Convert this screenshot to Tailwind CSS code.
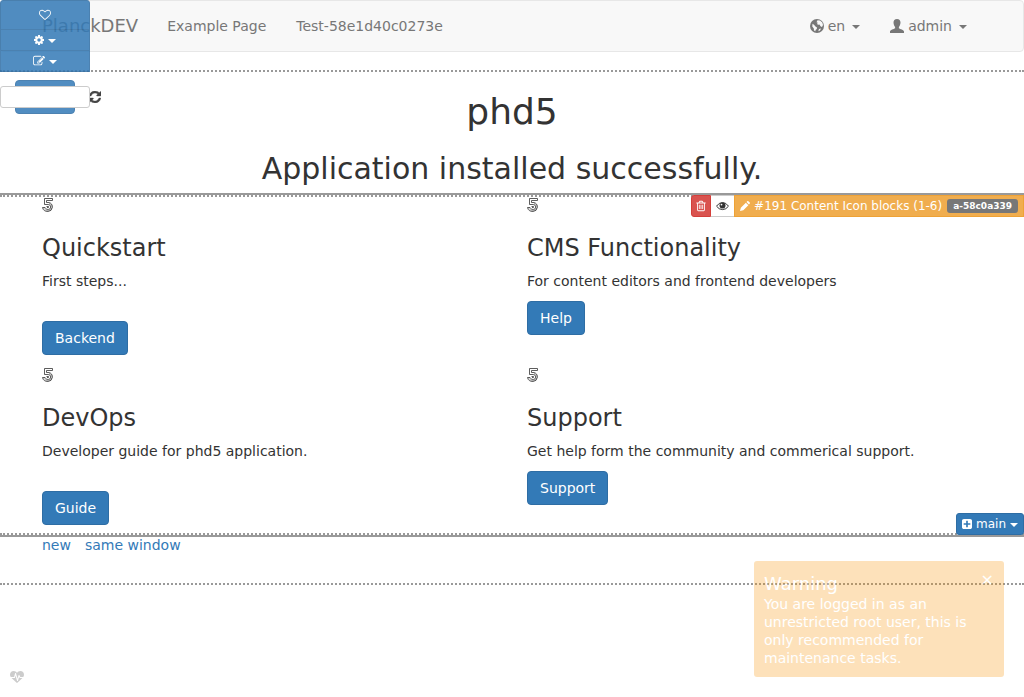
<!DOCTYPE html>
<html lang="en">
<head>
<meta charset="utf-8">
<title>phd5</title>
<script src="https://cdn.jsdelivr.net/npm/@tailwindcss/browser@4"></script>
</head>
<body class="relative min-h-screen bg-white font-['DejaVu_Sans',sans-serif] text-sm leading-5 text-[#333]">

<svg class="hidden" aria-hidden="true">
  <symbol id="five" viewBox="0 0 12 14">
    <g fill="none" stroke="#333" stroke-width="0.8">
      <path d="M10.500 .5H2.500V6.500H6.200A2.300 2.300 0 0 1 6.200 11.500C4.500 11.500 3.400 10.500 3 9.500H.5C1 12.300 3.200 13.500 6 13.500A4.600 4.600 0 0 0 7 4.500H4.500V2.500H10.500Z"/>
      <path d="M4.500 8.500H6.500V9.500H5"/>
    </g>
    <path fill="none" stroke="#333" stroke-width="0.4" d="M7 5.500A3.400 3.400 0 0 1 6.300 12.500C4 12.500 2.500 11.500 1.700 10.300"/>
  </symbol>
</svg>

<nav class="flex h-[52px] items-center justify-between rounded border border-[#e7e7e7] bg-[#f8f8f8] px-[41px] text-[#777]">
  <div class="flex items-center gap-[29px]">
    <a href="#" class="text-lg leading-5">PlanckDEV</a>
    <div class="flex gap-[30px]">
      <a href="#">Example Page</a>
      <a href="#">Test-58e1d40c0273e</a>
    </div>
  </div>
  <div class="flex items-center gap-[30px] pr-[15px]">
    <button class="flex items-center gap-1">
      <svg class="size-3.5" viewBox="0 0 14 14"><circle cx="7" cy="7" r="7" fill="#777"/><path fill="#f8f8f8" d="M7.500 1.200L10 1.600 12.300 3.500 13 6 12 8 10.500 7.200 9.500 5.500 8.200 5.800 7 5 7.800 3.800 6.500 3.200ZM2.500 4.800L4 5.800 5.500 7.500 7 8.500 6.800 10 5.500 11 5.500 12.300 4 11.500 3.800 9.500 2.300 7.500ZM9 10L11 9.500 10 11.500 8.300 12.300Z"/></svg>
      <span>en</span>
      <span class="mt-0.5 ml-[3px] border-x-4 border-t-4 border-x-transparent border-t-[#777]"></span>
    </button>
    <button class="flex items-center gap-1">
      <svg class="size-3.5" viewBox="0 0 14 14" fill="#777"><path d="M7 0C9.300 0 10.600 1.500 10.500 3.800C10.400 5.700 9.600 7.200 8.900 8V9.300C10 10.300 14 10.800 14 12.600V14H0V12.600C0 10.800 4 10.300 5.100 9.300V8C4.400 7.200 3.600 5.700 3.500 3.800C3.400 1.500 4.700 0 7 0Z"/></svg>
      <span>admin</span>
      <span class="mt-0.5 ml-[3px] border-x-4 border-t-4 border-x-transparent border-t-[#777]"></span>
    </button>
  </div>
</nav>

<main class="mt-[18px]">
  <header class="border-t-2 border-b-2 border-t-[#999] border-b-[#999] pt-5 pb-2 text-center [border-top-style:dotted]">
    <h1 class="text-4xl leading-10">phd5</h1>
    <h2 class="mt-5 text-3xl leading-[33px]">Application installed successfully.</h2>
  </header>

  <div class="relative border-b-2 border-[#999]">
    <section class="border-y-2 border-dotted border-[#999]">
      <div class="mx-auto grid max-w-[970px] grid-cols-2 gap-y-3 px-[15px] pb-2">
        <article class="pr-[15px]">
          <svg class="mt-px h-3.5 w-3"><use href="#five"/></svg>
          <h3 class="mt-[23px] text-2xl leading-[26px]">Quickstart</h3>
          <p class="mt-2.5">First steps...</p>
          <a href="#" class="mt-[30px] inline-block rounded border border-[#2e6da4] bg-[#337ab7] px-3 py-1.5 text-white">Backend</a>
        </article>
        <article class="pl-[15px]">
          <svg class="mt-px h-3.5 w-3"><use href="#five"/></svg>
          <h3 class="mt-[23px] text-2xl leading-[26px]">CMS Functionality</h3>
          <p class="mt-2.5">For content editors and frontend developers</p>
          <a href="#" class="mt-2.5 inline-block rounded border border-[#2e6da4] bg-[#337ab7] px-3 py-1.5 text-white">Help</a>
        </article>
        <article class="pr-[15px]">
          <svg class="mt-px h-3.5 w-3"><use href="#five"/></svg>
          <h3 class="mt-[23px] text-2xl leading-[26px]">DevOps</h3>
          <p class="mt-2.5">Developer guide for phd5 application.</p>
          <a href="#" class="mt-[30px] inline-block rounded border border-[#2e6da4] bg-[#337ab7] px-3 py-1.5 text-white">Guide</a>
        </article>
        <article class="pl-[15px]">
          <svg class="mt-px h-3.5 w-3"><use href="#five"/></svg>
          <h3 class="mt-[23px] text-2xl leading-[26px]">Support</h3>
          <p class="mt-2.5">Get help form the community and commerical support.</p>
          <a href="#" class="mt-2.5 inline-block rounded border border-[#2e6da4] bg-[#337ab7] px-3 py-1.5 text-white">Support</a>
        </article>
      </div>
    </section>

    <div class="absolute top-0 right-0 flex h-[22px] text-xs leading-[18px]">
      <button aria-label="Delete" class="flex items-center rounded-l-[3px] border border-[#d43f3a] bg-[#d9534f] px-[3px]">
        <svg class="size-3" viewBox="0 0 1792 1792" fill="#fff"><path d="M704 736v576q0 14-9 23t-23 9h-64q-14 0-23-9t-9-23v-576q0-14 9-23t23-9h64q14 0 23 9t9 23zm256 0v576q0 14-9 23t-23 9h-64q-14 0-23-9t-9-23v-576q0-14 9-23t23-9h64q14 0 23 9t9 23zm256 0v576q0 14-9 23t-23 9h-64q-14 0-23-9t-9-23v-576q0-14 9-23t23-9h64q14 0 23 9t9 23zm128 724v-948h-896v948q0 22 7 40.500t14.500 27 10.500 8.500h832q3 0 10.500-8.500t14.500-27 7-40.500zm-672-1076h448l-48-117q-7-9-17-11h-317q-10 2-17 11zm928 32v64q0 14-9 23t-23 9h-96v948q0 83-47 143.500t-113 60.500h-832q-66 0-113-58.500t-47-141.500v-952h-96q-14 0-23-9t-9-23v-64q0-14 9-23t23-9h309l70-167q15-37 54-63t79-26h320q40 0 79 26t54 63l70 167h309q14 0 23 9t9 23z"/></svg>
      </button>
      <button aria-label="Toggle visibility" class="flex items-center border-y border-[#ccc] bg-white px-[5px]">
        <svg class="h-3 w-[13px]" viewBox="0 0 13 12"><path d="M.5 6.200Q3 2.500 6.500 2.500T12.500 6.200Q10 9.600 6.500 9.600T.5 6.200Z" fill="#fff" stroke="#333"/><circle cx="6.500" cy="5.600" r="3" fill="#333"/><circle cx="5.500" cy="4.600" r=".9" fill="#fff"/></svg>
      </button>
      <button class="flex items-center border border-[#eea236] bg-[#f0ad4e] px-[5px] text-white">
        <svg class="size-2.5" viewBox="0 0 12 12" fill="#fff"><path d="M0 12L1 8 7 2 10 5 4 11ZM7.800 1.200L9 0Q9.500-.3 10 .2L11.700 1.900Q12.200 2.400 11.800 3L10.700 4.100Z"/></svg>
        <span class="ml-1">#191 Content Icon blocks (1-6)</span>
        <span class="ml-[5px] rounded-[3px] bg-[#777] px-1.5 text-[9px] leading-[14px] font-bold">a-58c0a339</span>
      </button>
    </div>

    <button class="absolute right-0 bottom-0 flex h-[22px] items-center rounded-[3px] border border-[#2e6da4] bg-[#337ab7] px-[5px] text-xs leading-[18px] text-white">
      <svg class="size-2.5" viewBox="128 128 1536 1536" fill="#fff"><path d="M1408 960v-128q0-26-19-45t-45-19h-320v-320q0-26-19-45t-45-19h-128q-26 0-45 19t-19 45v320h-320q-26 0-45 19t-19 45v128q0 26 19 45t45 19h320v320q0 26 19 45t45 19h128q26 0 45-19t19-45v-320h320q26 0 45-19t19-45zm256-544v960q0 119-84.500 203.500t-203.500 84.500h-960q-119 0-203.500-84.500t-84.500-203.500v-960q0-119 84.500-203.500t203.500-84.500h960q119 0 203.500 84.500t84.500 203.500z"/></svg>
      <span class="ml-1">main</span>
      <span class="mt-0.5 ml-1 border-x-4 border-t-4 border-x-transparent border-t-white"></span>
    </button>
  </div>

  <footer class="border-b-2 border-dotted border-[#999] pb-[30px]">
    <div class="mx-auto flex max-w-[970px] gap-3.5 px-[15px] leading-4 text-[#337ab7]">
      <a href="#">new</a>
      <a href="#">same window</a>
    </div>
  </footer>
</main>

<aside class="absolute top-0 left-0 w-[90px]">
  <div class="flex flex-col text-white opacity-85">
    <button aria-label="Favourite" class="flex h-[30px] items-center justify-center rounded-t-[3px] border border-[#2e6da4] bg-[#337ab7]">
      <svg class="size-3" viewBox="0 0 1792 1792" fill="#fff"><path d="M1664 596q0-81-21.500-143t-55-98.500-81.500-59.500-94-31-98-8-112 25.500-110.500 64-86.500 72-60 61.500q-18 22-49 22t-49-22q-24-28-60-61.500t-86.500-72-110.500-64-112-25.500-98 8-94 31-81.500 59.500-55 98.500-21.500 143q0 168 187 355l581 560 580-559q188-188 188-356zm128 0q0 221-229 450l-623 600q-18 18-44 18t-44-18l-624-602q-10-8-27.500-26t-55.500-65.500-68-97.500-53.500-121-23.500-138q0-220 127-344t351-124q62 0 126.500 21.500t120 58 95.500 68.500 76 68q36-36 76-68t95.500-68.500 120-58 126.500-21.500q224 0 351 124t127 344z"/></svg>
    </button>
    <button aria-label="Settings" class="-mt-px flex h-[22px] items-center justify-center gap-1 border border-[#2e6da4] bg-[#337ab7]">
      <svg class="size-2.5" viewBox="128 128 1536 1536" fill="#fff"><path d="M1152 896q0-106-75-181t-181-75-181 75-75 181 75 181 181 75 181-75 75-181zm512-109v222q0 12-8 23t-20 13l-185 28q-19 54-39 91 35 50 107 138 10 12 10 25t-9 23q-27 37-99 108t-94 71q-12 0-26-9l-138-108q-44 23-91 38-16 136-29 186-7 28-36 28h-222q-14 0-24.500-8.500t-11.500-21.500l-28-184q-49-16-90-37l-141 107q-10 9-25 9-14 0-25-11-126-114-165-168-7-10-7-23 0-12 8-23 15-21 51-66.500t54-70.500q-27-50-41-99l-183-27q-13-2-21-12.500t-8-23.500v-222q0-12 8-23t19-13l186-28q14-46 39-92-40-57-107-138-10-12-10-24 0-10 9-23 26-36 98.500-107.500t94.500-71.500q13 0 26 10l138 107q44-23 91-38 16-136 29-186 7-28 36-28h222q14 0 24.500 8.500t11.500 21.500l28 184q49 16 90 37l142-107q9-9 24-9 13 0 25 10 129 119 165 170 7 8 7 22 0 12-8 23-15 21-51 66.500t-54 70.500q26 50 41 98l183 28q13 2 21 12.500t8 23.500z"/></svg>
      <span class="mt-0.5 border-x-4 border-t-4 border-x-transparent border-t-white"></span>
    </button>
    <button aria-label="Edit" class="-mt-px flex h-[22px] items-center justify-center gap-1 border border-[#2e6da4] bg-[#337ab7]">
      <svg class="size-3" viewBox="0 0 1792 1792" fill="#fff"><path d="M888 1184l116-116-152-152-116 116v56h96v96h56zm440-720q-16-16-33 1l-350 350q-17 17-1 33t33-1l350-350q17-17 1-33zm80 594v190q0 119-84.500 203.500t-203.500 84.500h-832q-119 0-203.500-84.500t-84.500-203.500v-832q0-119 84.500-203.500t203.500-84.500h832q63 0 117 25 15 7 18 23 3 17-9 29l-49 49q-14 14-32 8-23-6-45-6h-832q-66 0-113 47t-47 113v832q0 66 47 113t113 47h832q66 0 113-47t47-113v-126q0-13 9-22l64-64q15-15 35-7t20 29zm-96-738l288 288-672 672h-288v-288zm444 132l-92 92-288-288 92-92q28-28 68-28t68 28l152 152q28 28 28 68t-28 68z"/></svg>
      <span class="mt-0.5 border-x-4 border-t-4 border-x-transparent border-t-white"></span>
    </button>
  </div>
</aside>

<div class="absolute top-20 left-0 flex h-[34px] w-[102px] items-center">
  <button aria-label="Apply" class="ml-[15px] h-[34px] w-[60px] rounded border border-[#2e6da4] bg-[#337ab7] opacity-85"></button>
  <svg class="ml-[14px] size-3" viewBox="128 128 1536 1536" fill="#444" stroke="#444" stroke-width="50"><path d="M1639 1056q0 5-1 7-64 268-268 434.500t-478 166.500q-146 0-282.500-55t-243.500-157l-129 129q-19 19-45 19t-45-19-19-45v-448q0-26 19-45t45-19h448q26 0 45 19t19 45-19 45l-137 137q71 66 161 102t187 36q134 0 250-65t186-179q11-17 53-117 8-23 30-23h192q13 0 22.500 9.500t9.500 22.500zm25-800v448q0 26-19 45t-45 19h-448q-26 0-45-19t-19-45 19-45l138-138q-148-137-349-137-134 0-250 65t-186 179q-11 17-53 117-8 23-30 23h-199q-13 0-22.500-9.500t-9.500-22.500v-7q65-268 270-434.500t480-166.500q146 0 284 55.500t245 156.500l130-129q19-19 45-19t45 19 19 45z"/></svg>
  <input type="text" aria-label="Search" class="absolute top-1.5 left-0 h-[22px] w-[90px] rounded-[3px] border border-[#ccc] bg-white px-1 text-xs">
</div>

<div role="alert" class="absolute right-5 bottom-5 w-[250px] rounded-[3px] bg-[#f89406] px-2.5 pt-3 pb-2.5 leading-[18px] text-white opacity-27">
  <button aria-label="Close" class="absolute top-2.5 right-2.5 text-base leading-[18px]">×</button>
  <h4 class="text-lg leading-[22px]">Warning</h4>
  <p>You are logged in as an unrestricted root user, this is only recommended for maintenance tasks.</p>
</div>

<svg class="absolute bottom-3 left-2.5 size-3.5" viewBox="0 0 1792 1792" fill="#ccc"><path d="M1280 896h305q-5 6-10 10.500t-9 7.500l-3 4-623 600q-18 18-44 18t-44-18l-624-602q-5-2-21-20h369q22 0 39.500-13.500t22.500-34.500l70-281 190 667q6 20 23 33t39 13q21 0 38-13t23-33l146-485 56 112q18 35 57 35zm512-428q0 145-103 300h-369l-111-221q-8-17-25.500-27t-36.500-8q-45 5-56 46l-129 430-196-686q-6-20-23.500-33t-39.500-13-39 13.500-22 34.500l-116 464h-423q-103-155-103-300 0-220 127-344t351-124q62 0 126.500 21.500t120 58 95.500 68.500 76 68q36-36 76-68t95.500-68.500 120-58 126.500-21.500q224 0 351 124t127 344z"/></svg>
</body>
</html>
